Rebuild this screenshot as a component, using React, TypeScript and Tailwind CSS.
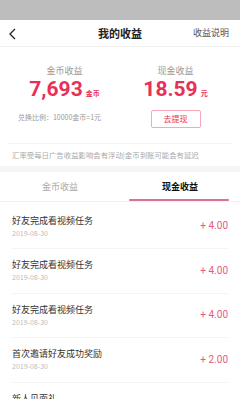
import React from 'react';

const records = [
  { title: '好友完成看视频任务', date: '2019-08-30', amount: '+ 4.00' },
  { title: '好友完成看视频任务', date: '2019-08-30', amount: '+ 4.00' },
  { title: '好友完成看视频任务', date: '2019-08-30', amount: '+ 4.00' },
  { title: '首次邀请好友成功奖励', date: '2019-08-30', amount: '+ 2.00' },
  { title: '新人见面礼', date: '2019-08-30', amount: '+ 1.00' },
];

const App: React.FC = () => {
  return (
    <div
      className="w-[240px] h-[399px] overflow-hidden bg-white"
      style={{ fontFamily: '"Noto Sans CJK SC", "Noto Sans", sans-serif' }}
    >
      {/* status bar */}
      <div className="h-[20px] bg-[#bdbdbd]" />

      {/* header */}
      <div className="relative h-[27px] flex items-center justify-center border-b border-[#f2f2f2]">
        <svg className="absolute left-[8px] top-[8px]" width="9" height="12" viewBox="0 0 9 12">
          <path d="M7 1 L2 6 L7 11" fill="none" stroke="#222" strokeWidth="1.3" />
        </svg>
        <span className="text-[11px] font-bold text-[#222] leading-none">我的收益</span>
        <span className="absolute right-[11px] top-[8px] text-[9px] text-[#555] leading-none">收益说明</span>
      </div>

      {/* summary */}
      <div className="flex pt-[19px] px-[10px]">
        <div className="flex-1 flex flex-col items-center">
          <span className="text-[9px] text-[#999] leading-none">金币收益</span>
          <div className="flex items-baseline mt-[4px] text-[#e92f57]">
            <span className="text-[21px] font-bold leading-none" style={{ fontFamily: 'Roboto, sans-serif' }}>7,693</span>
            <span className="text-[7px] font-bold ml-[3px]">金币</span>
          </div>
          <span className="text-[7px] text-[#999] leading-none mt-[14px] -ml-[10px]">兑换比例：10000金币=1元</span>
        </div>
        <div className="flex-1 flex flex-col items-center pl-[2px]">
          <span className="text-[9px] text-[#999] leading-none">现金收益</span>
          <div className="flex items-baseline mt-[4px] text-[#e92f57]">
            <span className="text-[21px] font-bold leading-none" style={{ fontFamily: 'Roboto, sans-serif' }}>18.59</span>
            <span className="text-[7px] font-bold ml-[3px]">元</span>
          </div>
          <button className="mt-[10px] w-[50px] h-[18px] border border-[#f3a9b9] rounded-[2px] text-[8px] text-[#e92f57] leading-none flex items-center justify-center">
            去提现
          </button>
        </div>
      </div>

      {/* note */}
      <div className="mt-[15px] mx-[8px] border-t border-[#f4f4f4] pt-[7px] pb-[8px]">
        <p className="text-[7.4px] text-[#aaa] leading-none pl-[4px] whitespace-nowrap">
          汇率受每日广告收益影响会有浮动|金币到账可能会有延迟
        </p>
      </div>

      <div className="h-[6px] bg-[#f5f5f5]" />

      {/* tabs */}
      <div className="flex h-[30px] border-b border-[#f2f2f2]">
        <div className="flex-1 flex items-center justify-center text-[9px] text-[#aaa] pb-[1px]">金币收益</div>
        <div className="flex-1 relative flex items-center justify-center text-[9px] font-bold text-[#111] pb-[1px]">
          现金收益
          <div className="absolute bottom-0 left-[9px] right-[11px] h-[2px] rounded-full bg-[#d9738f]" />
        </div>
      </div>

      {/* list */}
      <div className="px-[12px] pt-[2px]">
        {records.map((r, i) => (
          <div key={i} className="h-[44.6px] flex items-center justify-between border-b border-[#f5f5f5]">
            <div className="flex flex-col">
              <span className="text-[9px] text-[#333] leading-none">{r.title}</span>
              <span className="text-[7px] text-[#bbb] leading-none mt-[5px]">{r.date}</span>
            </div>
            <span className="text-[10px] text-[#e65a80] leading-none" style={{ fontFamily: 'Roboto, sans-serif' }}>
              {r.amount}
            </span>
          </div>
        ))}
      </div>
    </div>
  );
};

export default App;
